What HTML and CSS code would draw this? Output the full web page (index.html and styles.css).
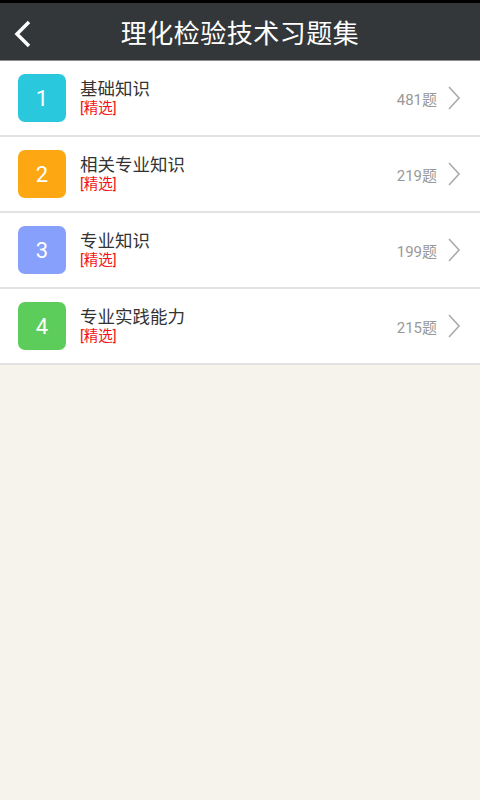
FILE: index.html
```html
<!DOCTYPE html>
<html lang="zh-CN">
  <head>
    <meta charset="UTF-8" />
    <meta name="viewport" content="width=device-width, initial-scale=1.0" />
    <title>理化检验技术习题集</title>
    <link rel="stylesheet" href="styles.css">
  </head>
  <body>
    <div class="status"></div>
    <header class="topbar">
      <a class="back" href="#">
        <svg width="20" height="28" viewBox="0 0 20 28"><path d="M16 2 L4 14 L16 26" fill="none" stroke="#fff" stroke-width="3.5" /></svg>
      </a>
      <h1>理化检验技术习题集</h1>
    </header>
    <ul class="list">
      <li class="item">
        <span class="num c1">1</span>
        <div class="info">
          <div class="name">基础知识</div>
          <div class="tag">[精选]</div>
        </div>
        <span class="count">481题</span>
        <svg class="arrow" width="14" height="24" viewBox="0 0 14 24"><path d="M2 1 L12 12 L2 23" fill="none" stroke="#aaa" stroke-width="1.6" /></svg>
      </li>
      <li class="item">
        <span class="num c2">2</span>
        <div class="info">
          <div class="name">相关专业知识</div>
          <div class="tag">[精选]</div>
        </div>
        <span class="count">219题</span>
        <svg class="arrow" width="14" height="24" viewBox="0 0 14 24"><path d="M2 1 L12 12 L2 23" fill="none" stroke="#aaa" stroke-width="1.6" /></svg>
      </li>
      <li class="item">
        <span class="num c3">3</span>
        <div class="info">
          <div class="name">专业知识</div>
          <div class="tag">[精选]</div>
        </div>
        <span class="count">199题</span>
        <svg class="arrow" width="14" height="24" viewBox="0 0 14 24"><path d="M2 1 L12 12 L2 23" fill="none" stroke="#aaa" stroke-width="1.6" /></svg>
      </li>
      <li class="item">
        <span class="num c4">4</span>
        <div class="info">
          <div class="name">专业实践能力</div>
          <div class="tag">[精选]</div>
        </div>
        <span class="count">215题</span>
        <svg class="arrow" width="14" height="24" viewBox="0 0 14 24"><path d="M2 1 L12 12 L2 23" fill="none" stroke="#aaa" stroke-width="1.6" /></svg>
      </li>
    </ul>
  </body>
</html>
```
FILE: styles.css
```css
html, body {
  margin: 0;
  padding: 0;
  height: 100%;
}
body {
  font-family: Roboto, "Noto Sans CJK SC", sans-serif;
  background: #f6f3ec;
}
.status {
  height: 3px;
  background: #000;
}
.topbar {
  height: 57px;
  background: #33373a;
  border-bottom: 1px solid #8a8c8d;
  display: flex;
  align-items: center;
  justify-content: center;
  position: relative;
}
.back {
  position: absolute;
  left: 13px;
  top: 17px;
  display: block;
  height: 28px;
}
.topbar h1 {
  margin: 0;
  color: #fff;
  font-size: 26px;
  font-weight: normal;
  letter-spacing: 0.5px;
}
.list {
  list-style: none;
  margin: 0;
  padding: 0;
}
.item {
  height: 74px;
  background: #fff;
  border-bottom: 2px solid #e2e2e2;
  display: flex;
  align-items: center;
  padding: 0 19px 0 18px;
}
.num {
  width: 48px;
  height: 48px;
  border-radius: 7px;
  color: #fff;
  font-size: 22px;
  display: flex;
  align-items: center;
  justify-content: center;
  margin-right: 14px;
}
.c1 { background: #29c8dc; }
.c2 { background: #fda813; }
.c3 { background: #86a0fb; }
.c4 { background: #5ccd5a; }
.info {
  flex: 1;
}
.name {
  font-size: 17.5px;
  color: #333;
  line-height: 22px;
}
.tag {
  font-size: 14.5px;
  color: #f2141a;
  line-height: 18px;
}
.count {
  font-size: 15px;
  color: #999;
  margin-right: 10px;
}
.arrow {
  display: block;
}
```
